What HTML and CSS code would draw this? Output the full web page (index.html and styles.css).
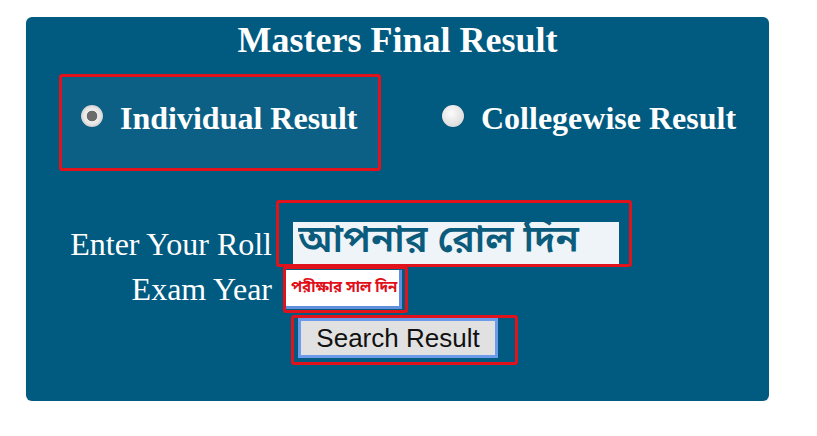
FILE: index.html
```html
<!DOCTYPE html>
<html lang="en">
<head>
<meta charset="utf-8">
<title>Masters Final Result</title>
<link rel="stylesheet" href="styles.css">
</head>
<body>
<div class="panel">
  <h1 class="title">Masters Final Result</h1>
  <div class="options">
    <label class="opt opt-boxed"><input class="radio" type="radio" name="type" checked><span class="opt-text">Individual Result</span></label>
    <label class="opt opt-plain"><input class="radio" type="radio" name="type"><span class="opt-text">Collegewise Result</span></label>
  </div>
  <form class="form">
    <div class="row row-roll">
      <label class="lbl">Enter Your Roll</label>
      <span class="mark mark-roll"><input class="roll" type="text" placeholder="আপনার রোল দিন"></span>
    </div>
    <div class="row row-year">
      <label class="lbl">Exam Year</label>
      <span class="mark mark-year"><input class="year" type="text" placeholder="পরীক্ষার সাল দিন"></span>
    </div>
    <div class="row row-btn">
      <span class="lbl"></span>
      <span class="mark mark-btn"><button class="btn" type="button">Search Result</button></span>
    </div>
  </form>
</div>
</body>
</html>
```

FILE: styles.css
```css
html, body {
  margin: 0;
  padding: 0;
  background: #ffffff;
}

.panel {
  box-sizing: border-box;
  margin: 17px 0 0 26px;
  width: 743px;
  height: 384px;
  padding-top: 1px;
  background: #015a7f;
  border-radius: 6px;
  box-shadow: 0 2px 3px rgba(0, 0, 0, 0.08);
  font-family: "Liberation Serif", "Times New Roman", serif;
  color: #ffffff;
}

.title {
  margin: 0;
  font: 700 36px/44px "Liberation Serif", "Times New Roman", serif;
  text-align: center;
}

.options {
  display: flex;
  align-items: flex-start;
  margin-top: 12px;
  padding-left: 33px;
}

.opt {
  display: flex;
  align-items: flex-start;
  box-sizing: border-box;
}

.opt-boxed {
  width: 322px;
  height: 97px;
  padding: 21px 0 0 19px;
  border: 3px solid #e0121b;
  border-radius: 3px;
  background: #0c6086;
}

.opt-plain {
  margin-left: 61px;
  padding-top: 24px;
}

.opt-text {
  margin-left: 17px;
  font: 700 32px/40px "Liberation Serif", "Times New Roman", serif;
  white-space: nowrap;
}

.radio {
  appearance: none;
  -webkit-appearance: none;
  flex: none;
  width: 22px;
  height: 22px;
  margin: 7px 0 0 0;
  border-radius: 50%;
  background: radial-gradient(circle at 42% 38%, #fbfbfb 0, #e4e4e4 55%, #cfcfcf 100%);
  box-shadow: 0 0 1px rgba(0, 0, 0, 0.3);
}

.radio:checked {
  background: radial-gradient(circle, #6c6c6c 0, #6c6c6c 5px, #ededed 5.6px, #e6e6e6 8.5px, #cdcdcd 11px);
}

.form {
  margin-top: 29px;
}

.row {
  display: flex;
  align-items: flex-start;
}

.lbl {
  box-sizing: border-box;
  flex: none;
  width: 246px;
  text-align: right;
  font: 400 32px/36px "Liberation Serif", "Times New Roman", serif;
  white-space: nowrap;
}

.mark {
  display: flex;
  align-items: flex-start;
  box-sizing: border-box;
  border: 3px solid #e0121b;
  border-radius: 3px;
}

.row-roll .lbl {
  margin-top: 26px;
}

.mark-roll {
  margin-left: 4px;
  width: 356px;
  height: 67px;
  padding: 19px 10px 0 14px;
}

.roll {
  box-sizing: border-box;
  width: 326px;
  height: 42px;
  margin: 0;
  padding: 0 0 0 5px;
  border: none;
  outline: none;
  background: #eef4f8;
  font: 600 38px/42px "Noto Sans Bengali", "Noto Serif Bengali", "Lohit Bengali", "FreeSans", sans-serif;
  color: #0b5b7d;
}

.roll::placeholder {
  color: #0b5b7d;
  opacity: 1;
}

.row-year {
  margin-top: -1px;
}

.row-year .lbl {
  margin-top: 5px;
}

.mark-year {
  margin-left: 11px;
  width: 125px;
  height: 47px;
  padding: 1px 3px 0 0;
}

.year {
  box-sizing: border-box;
  width: 116px;
  height: 39px;
  margin: 0;
  padding: 0 0 0 5px;
  border: none;
  border-right: 3px solid #5f90dd;
  border-bottom: 3px solid #5f90dd;
  outline: none;
  background: #ffffff;
  font: 700 15px/36px "Noto Sans Bengali", "Noto Serif Bengali", "Lohit Bengali", "FreeSans", sans-serif;
  color: #e0101a;
}

.year::placeholder {
  color: #e0101a;
  opacity: 1;
}

.row-btn {
  margin-top: 2px;
}

.mark-btn {
  margin-left: 19px;
  width: 227px;
  height: 50px;
  padding: 0 0 0 4px;
}

.btn {
  box-sizing: border-box;
  width: 200px;
  height: 40px;
  margin: 0;
  padding: 0;
  border: 3px solid #6b9bea;
  background: #e1e1e1;
  font: 400 26px/32px "Liberation Sans", Arial, sans-serif;
  color: #111111;
}
```
